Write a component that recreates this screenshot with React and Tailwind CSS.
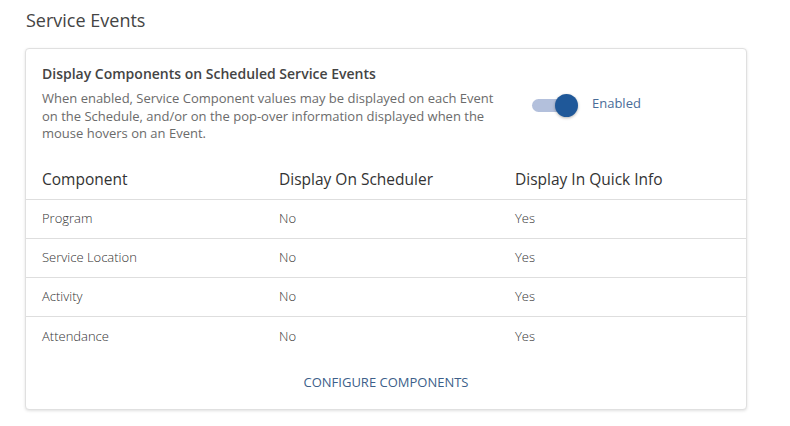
const rows = [
  { name: 'Program', scheduler: 'No', quickInfo: 'Yes' },
  { name: 'Service Location', scheduler: 'No', quickInfo: 'Yes' },
  { name: 'Activity', scheduler: 'No', quickInfo: 'Yes' },
  { name: 'Attendance', scheduler: 'No', quickInfo: 'Yes' },
];

function Toggle() {
  return (
    <div className="relative h-[24px] w-[48px]">
      <div className="absolute left-0 top-[6px] h-[13px] w-[40px] rounded-full bg-[#b3c0dc]" />
      <div className="absolute left-[23px] top-[1px] h-[23px] w-[23px] rounded-full bg-[#1f5899] shadow-[0_1px_3px_rgba(0,0,0,0.3)]" />
    </div>
  );
}

export default function App() {
  return (
    <div className="h-[426px] w-[790px] bg-white font-['Open_Sans',sans-serif] text-[#333]">
      <div className="px-[26px] pt-[7px]">
        <h1 className="text-[18px] leading-[26px] text-[#444]">Service Events</h1>
      </div>

      <div className="ml-[25px] mt-[15px] w-[722px] rounded-[4px] border border-[#e0e0e0] bg-white shadow-[0_1px_3px_rgba(0,0,0,0.12)]">
        <div className="flex px-4 pt-[15px]">
          <div className="w-[470px]">
            <h2 className="text-[14px] font-semibold leading-[20px] text-[#444]">
              Display Components on Scheduled Service Events
            </h2>
            <p className="mt-[6px] text-[13px] leading-[17.5px] text-[#6b6b6b]">
              When enabled, Service Component values may be displayed on each Event on the Schedule, and/or on the pop-over information displayed when the mouse hovers on an Event.
            </p>
          </div>
          <div className="ml-[20px] mt-[29px] flex items-start gap-[12px]">
            <Toggle />
            <span className="text-[13px] leading-[20px] text-[#4a6c98]">Enabled</span>
          </div>
        </div>

        <div className="mt-[25px]">
          <div className="grid grid-cols-[237px_236px_1fr] border-b border-[#dedede] px-4 pb-[9px] text-[15.5px] leading-[22px] text-[#333]">
            <div>Component</div>
            <div>Display On Scheduler</div>
            <div>Display In Quick Info</div>
          </div>
          {rows.map((row, i) => (
            <div
              key={row.name}
              className={`grid h-[39px] grid-cols-[237px_236px_1fr] items-center px-4 pt-[1px] text-[13px] font-light text-[#333] ${
                i < rows.length - 1 ? 'border-b border-[#dedede]' : ''
              }`}
            >
              <div>{row.name}</div>
              <div>{row.scheduler}</div>
              <div>{row.quickInfo}</div>
            </div>
          ))}
        </div>

        <div className="flex justify-center pb-[17px] pt-[16px]">
          <button className="text-[13px] leading-[20px] text-[#3d5f8a]">CONFIGURE COMPONENTS</button>
        </div>
      </div>
    </div>
  );
}
